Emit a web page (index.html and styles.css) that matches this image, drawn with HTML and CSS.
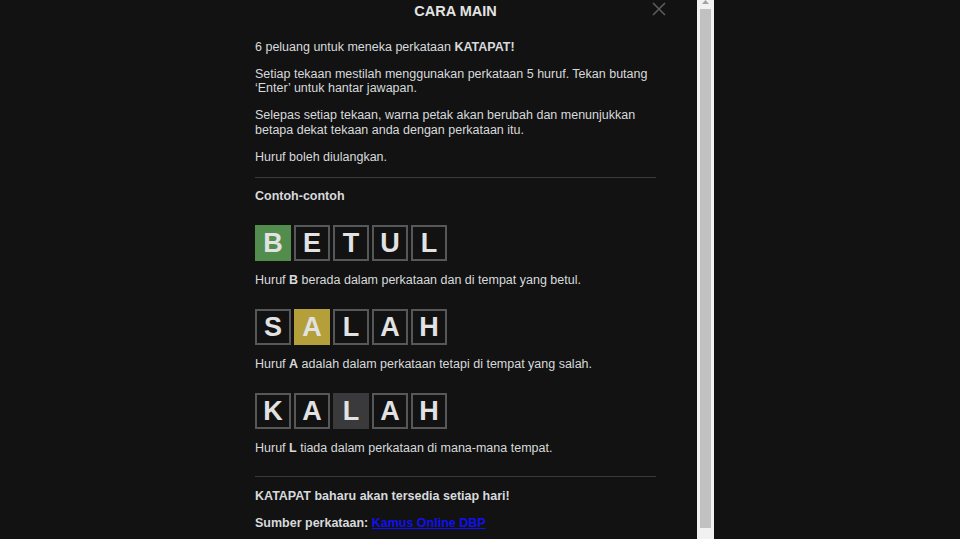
FILE: index.html
```html
<!DOCTYPE html>
<html lang="ms">
  <head>
    <meta charset="UTF-8" />
    <meta name="viewport" content="width=device-width, initial-scale=1.0" />
    <title>Katapat - Cara Main</title>
    <link rel="stylesheet" href="styles.css">
  </head>
  <body>
    <div class="modal">
      <div class="modal-inner">
        <header class="modal-header">
          <h1 class="modal-title">CARA MAIN</h1>
          <button class="close-button" title="Tutup">
            <svg width="14" height="14" viewBox="0 0 14 14">
              <path d="M1 1 L13 13 M13 1 L1 13" stroke="#5c5c5e" stroke-width="1.6" fill="none" />
            </svg>
          </button>
        </header>

        <section class="rules">
          <p>6 peluang untuk meneka perkataan <strong>KATAPAT!</strong></p>
          <p>Setiap tekaan mestilah menggunakan perkataan 5 huruf. Tekan butang ‘Enter’ untuk hantar jawapan.</p>
          <p>Selepas setiap tekaan, warna petak akan berubah dan menunjukkan betapa dekat tekaan anda dengan perkataan itu.</p>
          <p>Huruf boleh diulangkan.</p>
        </section>

        <section class="examples">
          <h2 class="examples-title">Contoh-contoh</h2>

          <div class="example">
            <div class="tiles">
              <div class="tile correct">B</div>
              <div class="tile">E</div>
              <div class="tile">T</div>
              <div class="tile">U</div>
              <div class="tile">L</div>
            </div>
            <p>Huruf <strong>B</strong> berada dalam perkataan dan di tempat yang betul.</p>
          </div>

          <div class="example">
            <div class="tiles">
              <div class="tile">S</div>
              <div class="tile present">A</div>
              <div class="tile">L</div>
              <div class="tile">A</div>
              <div class="tile">H</div>
            </div>
            <p>Huruf <strong>A</strong> adalah dalam perkataan tetapi di tempat yang salah.</p>
          </div>

          <div class="example">
            <div class="tiles">
              <div class="tile">K</div>
              <div class="tile">A</div>
              <div class="tile absent">L</div>
              <div class="tile">A</div>
              <div class="tile">H</div>
            </div>
            <p>Huruf <strong>L</strong> tiada dalam perkataan di mana-mana tempat.</p>
          </div>
        </section>

        <section class="footer-notes">
          <p><strong>KATAPAT baharu akan tersedia setiap hari!</strong></p>
          <p><strong>Sumber perkataan: <a href="#">Kamus Online DBP</a></strong></p>
        </section>
      </div>
    </div>

    <!-- scroll track for the modal body -->
    <div class="scrollbar">
      <div class="scroll-arrow">
        <svg width="7" height="4" viewBox="0 0 7 4">
          <path d="M0 4 L3.5 0 L7 4 Z" fill="#a3a3a3" />
        </svg>
      </div>
      <div class="scroll-thumb"></div>
    </div>
  </body>
</html>
```

FILE: styles.css
```css
html,
body {
  height: 100%;
}

body {
  margin: 0;
  display: flex;
  overflow: hidden;
  font-family: "Liberation Sans", Arial, Helvetica, sans-serif;
  font-size: 12.5px;
  line-height: 14.5px;
  color: #d7dadc;
  background-color: #121212;
}

.modal {
  width: 457px;
  height: 100%;
  margin-left: 240px;
  overflow: hidden;
}

.modal-inner {
  padding: 0 41px 20px 15px;
}

.modal-header {
  position: relative;
  padding-top: 3px;
}

.modal-title {
  margin: 0;
  font-size: 14.5px;
  line-height: 17px;
  text-align: center;
  color: #e3e3e3;
}

.close-button {
  position: absolute;
  top: 2px;
  right: -10px;
  padding: 0;
  border: none;
  background: none;
  cursor: pointer;
}

.close-button svg {
  display: block;
}

.rules {
  padding-top: 7.25px;
  padding-bottom: 0.25px;
  border-bottom: 1px solid #3a3a3c;
}

.rules p {
  margin: 12.5px 0;
}

.examples {
  padding-top: 10.75px;
  padding-bottom: 20.75px;
  border-bottom: 1px solid #3a3a3c;
}

.examples-title {
  margin: 0;
  font-size: 12.5px;
  line-height: 14.5px;
}

.example {
  padding-top: 21.75px;
}

.example p {
  margin: 11.75px 0 0;
}

.tiles {
  display: flex;
  gap: 3px;
}

.tile {
  width: 36px;
  height: 36px;
  box-sizing: border-box;
  display: flex;
  justify-content: center;
  align-items: center;
  border: 2px solid #565758;
  font-size: 27px;
  font-weight: bold;
  color: #e2e2e2;
}

.tile.correct {
  border-color: #538d4e;
  background-color: #538d4e;
}

.tile.present {
  border-color: #b59f3b;
  background-color: #b59f3b;
}

.tile.absent {
  border-color: #3a3a3c;
  background-color: #3a3a3c;
}

.footer-notes {
  padding-top: 12.25px;
}

.footer-notes p {
  margin: 0 0 12px;
}

.footer-notes a {
  color: #1010f0;
}

.scrollbar {
  width: 17px;
  height: 100%;
  flex-shrink: 0;
  display: flex;
  flex-direction: column;
  background-color: #f1f1f1;
}

.scroll-arrow {
  height: 9px;
  display: flex;
  justify-content: center;
  align-items: flex-start;
}

.scroll-arrow svg {
  display: block;
}

.scroll-thumb {
  height: 519px;
  margin: 0 3px;
  background-color: #c1c1c1;
}
```
